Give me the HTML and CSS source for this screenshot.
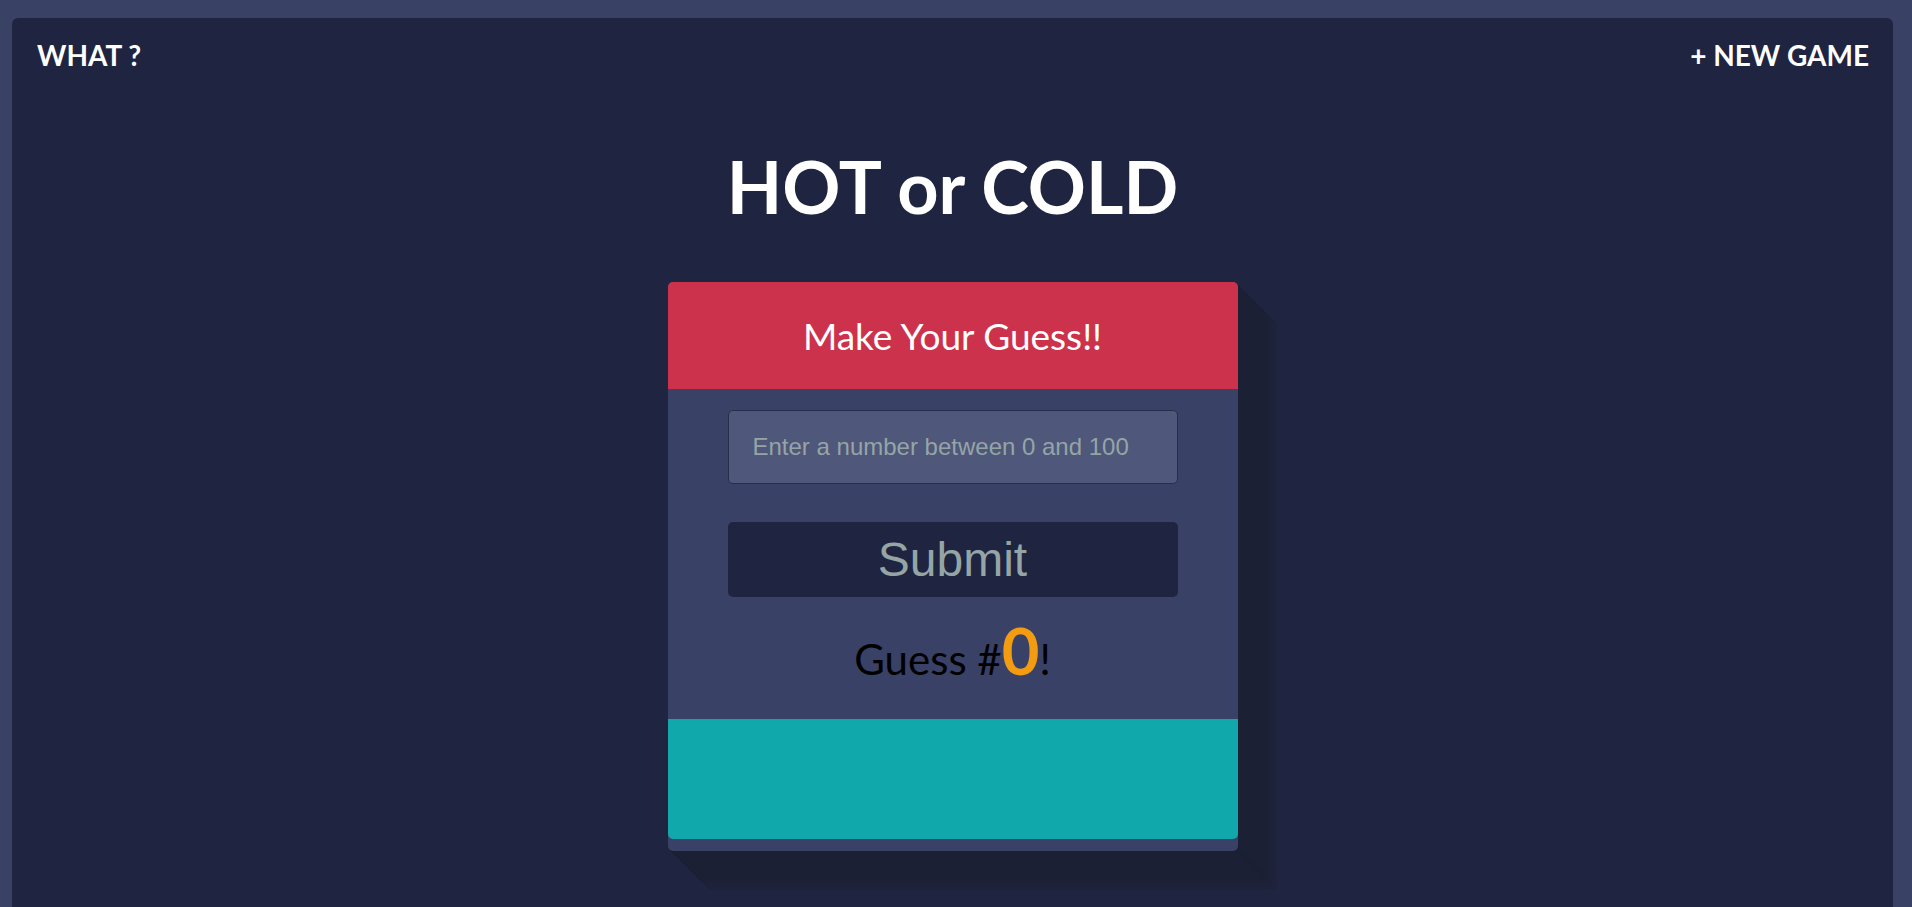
FILE: index.html
```html
<!DOCTYPE html>
<html lang="en">
<head>
<meta charset="utf-8">
<title>HOT or COLD</title>
<link rel="stylesheet" href="styles.css">
</head>
<body>
<div class="frame">
  <div class="panel">
    <nav class="nav">
      <a class="nav-link" href="#">What ?</a>
      <a class="nav-link" href="#">+ New Game</a>
    </nav>
    <h1 class="title">HOT or COLD</h1>
    <section class="game">
      <h2 class="feedback">Make Your Guess!!</h2>
      <form class="guess-form">
        <input class="guess-input" type="text" placeholder="Enter a number between 0 and 100">
        <button class="guess-button" type="button">Submit</button>
        <p class="guess-count">Guess #<span class="count">0</span>!</p>
      </form>
      <ul class="guess-list"></ul>
    </section>
  </div>
</div>
</body>
</html>
```
FILE: styles.css
```css
html, body {
  margin: 0;
  padding: 0;
  background: #394264;
  height: 100%;
  overflow: hidden;
}

.frame {
  box-sizing: border-box;
  height: 100%;
  padding: 18px 19px 0 12px;
  display: flex;
}

.panel {
  flex: 1;
  background: #1f2440;
  border-radius: 6px 6px 0 0;
  font-family: Lato, "Noto Sans", sans-serif;
  color: #fff;
}

.nav {
  display: flex;
  justify-content: space-between;
  padding: 20px 24px 0 25px;
}

.nav-link {
  color: #fff;
  text-decoration: none;
  text-transform: uppercase;
  font-weight: 700;
  font-size: 28px;
  line-height: 34px;
}

.title {
  margin: 78px 0 0;
  text-align: center;
  font-weight: 700;
  font-size: 72px;
  line-height: 72px;
}

.game {
  width: 570px;
  margin: 60px auto 0;
  background: #3a4166;
  border-radius: 5px;
  padding-bottom: 12px;
  box-shadow:
    1px 1px #1b2035, 2px 2px #1b2035, 3px 3px #1b2035, 4px 4px #1b2035,
    5px 5px #1b2035, 6px 6px #1b2035, 7px 7px #1b2035, 8px 8px #1b2035,
    9px 9px #1b2035, 10px 10px #1b2035, 11px 11px #1b2035, 12px 12px #1b2035,
    13px 13px #1b2035, 14px 14px #1b2035, 15px 15px #1b2035, 16px 16px #1b2035,
    17px 17px #1b2035, 18px 18px #1b2035, 19px 19px #1b2035, 20px 20px #1b2035,
    21px 21px #1b2035, 22px 22px #1b2035, 23px 23px #1b2035, 24px 24px #1b2035,
    25px 25px #1b2035, 26px 26px #1b2035, 27px 27px #1b2035, 28px 28px #1b2035,
    29px 29px #1b2035, 30px 30px #1c2137, 31px 31px #1c2137, 32px 32px #1c2137,
    33px 33px #1d2239, 34px 34px #1d2239, 35px 35px #1d2239, 36px 36px #1e233b,
    37px 37px #1e233b, 38px 38px #1e233d, 39px 39px #1e233d, 40px 40px #1f243f;
}

.feedback {
  margin: 0;
  height: 107px;
  display: flex;
  align-items: center;
  justify-content: center;
  background: #cc324b;
  border-radius: 5px 5px 0 0;
  font-weight: 400;
  font-size: 37px;
  color: #fff;
}

.guess-form {
  display: flex;
  flex-direction: column;
  align-items: center;
  padding: 21px 0 30px;
  margin: 0;
}

.guess-input {
  box-sizing: border-box;
  width: 450px;
  height: 74px;
  padding: 0 24px;
  background: #4f577a;
  border: 1px solid #282e4a;
  border-radius: 5px;
  font-family: "Liberation Sans", Arial, sans-serif;
  font-size: 24px;
  color: #95a5a6;
  outline: none;
}

.guess-input::placeholder {
  color: #95a5a6;
  opacity: 1;
}

.guess-button {
  box-sizing: border-box;
  width: 450px;
  height: 75px;
  margin-top: 38px;
  background: #1f2440;
  border: none;
  border-radius: 5px;
  font-family: "Liberation Sans", Arial, sans-serif;
  font-size: 48px;
  color: #95a5a6;
  padding: 0;
}

.guess-count {
  margin: 14px 0 0;
  font-size: 42px;
  line-height: normal;
  color: #000;
}

.count {
  font-size: 65px;
  font-weight: 700;
  color: #f39c12;
}

.guess-list {
  margin: 0;
  padding: 0;
  list-style: none;
  height: 120px;
  background: #11a8ab;
  border-radius: 0 0 5px 5px;
}
```
